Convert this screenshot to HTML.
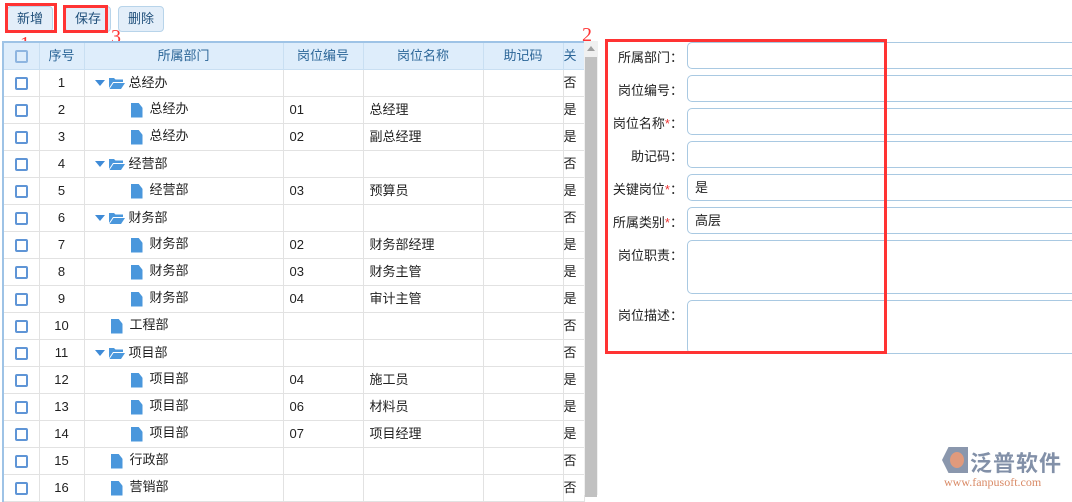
<!DOCTYPE html>
<html><head><meta charset="utf-8"><style>
*{margin:0;padding:0;box-sizing:border-box}
body{width:1072px;height:495px;overflow:hidden;background:#fff;font-family:"Liberation Sans","Noto Sans CJK SC",sans-serif;font-size:13px;color:#222;position:relative}
.btn{position:absolute;top:6px;height:26px;border:1px solid #b8d4ea;border-radius:4px;background:#e3eef9;color:#1f4f7a;line-height:24px;text-align:center;width:46px}
.red{position:absolute;border:3px solid #f33}
.num{position:absolute;color:#f33;font-family:"Liberation Serif",serif;font-size:20px}
table{position:absolute;left:2px;top:41px;border-collapse:collapse;table-layout:fixed;border-left:2px solid #9ec3e6}
td,th{border:1px solid #e2e2e2;height:27px;padding:0;white-space:nowrap;overflow:hidden;font-weight:normal;line-height:16px}
th{background:#deedfb;color:#2c6698;border-color:#c9dff2;border-top:2px solid #9ec3e6}
td.c{text-align:center}
.cb{display:inline-block;width:13px;height:13px;border:2px solid #5f95d6;border-radius:2px;vertical-align:middle}
.ar{display:inline-block;width:0;height:0;border-left:5px solid transparent;border-right:5px solid transparent;border-top:6px solid #3f8bd7;vertical-align:middle;margin-right:4px}
.fd{display:inline-block;width:16px;height:12px;vertical-align:middle;margin-right:4px}
.fl{display:inline-block;width:12px;height:15px;background:#4a97dc;vertical-align:middle;margin-right:7px;clip-path:polygon(0 0,65% 0,100% 35%,100% 100%,0 100%)}
.sb{position:absolute;left:584px;top:41px;width:14px;height:454px;background:#f0f0f0}
.sb i{position:absolute;left:1px;top:16px;width:12px;height:440px;background:#c1c1c1}
.sb b{position:absolute;left:3px;top:5px;border-left:4px solid transparent;border-right:4px solid transparent;border-bottom:5px solid #a0a0a0}
.lb{position:absolute;width:76px;text-align:right;left:607px;font-size:13px;color:#222}
.lb s{color:#e33;text-decoration:none}
.in{position:absolute;left:687px;width:400px;height:27px;border:1px solid #a9c9e2;border-radius:5px;background:#fff;padding-left:7px;line-height:25px}
</style></head><body>
<svg width="0" height="0" style="position:absolute"><symbol id="f" viewBox="0 0 16 12"><path d="M0 1h5l1.5 1.5H14V5H4L0 11z" fill="#4a97dc"/><path d="M4.5 6H16L12 12H0.5z" fill="#4a97dc"/></symbol></svg>
<div class="btn" style="left:7px">新增</div>
<div class="btn" style="left:65px">保存</div>
<div class="btn" style="left:118px">删除</div>
<div class="red" style="left:5px;top:3px;width:52px;height:30px"></div>
<div class="red" style="left:63px;top:5px;width:45px;height:28px"></div>
<div class="num" style="left:20px;top:33px">1</div>
<div class="num" style="left:111px;top:26px">3</div>
<div class="num" style="left:582px;top:24px">2</div>
<table>
<colgroup><col style="width:36px"><col style="width:45px"><col style="width:199px"><col style="width:80px"><col style="width:120px"><col style="width:80px"><col style="width:21px"></colgroup>
<tr><th style="height:26px"><span class="cb" style="border-color:#8eb5e0"></span></th><th style="height:26px">序号</th><th>所属部门</th><th>岗位编号</th><th>岗位名称</th><th>助记码</th><th style="text-align:left">关</th></tr>
<tr><td class="c"><span class="cb"></span></td><td class="c">1</td><td style="padding-left:10px"><span class="ar"></span><svg class="fd"><use href="#f"/></svg>总经办</td><td></td><td></td><td></td><td>否</td></tr>
<tr><td class="c"><span class="cb"></span></td><td class="c">2</td><td style="padding-left:46px"><span class="fl"></span>总经办</td><td style="padding-left:6px">01</td><td style="padding-left:6px">总经理</td><td></td><td>是</td></tr>
<tr><td class="c"><span class="cb"></span></td><td class="c">3</td><td style="padding-left:46px"><span class="fl"></span>总经办</td><td style="padding-left:6px">02</td><td style="padding-left:6px">副总经理</td><td></td><td>是</td></tr>
<tr><td class="c"><span class="cb"></span></td><td class="c">4</td><td style="padding-left:10px"><span class="ar"></span><svg class="fd"><use href="#f"/></svg>经营部</td><td></td><td></td><td></td><td>否</td></tr>
<tr><td class="c"><span class="cb"></span></td><td class="c">5</td><td style="padding-left:46px"><span class="fl"></span>经营部</td><td style="padding-left:6px">03</td><td style="padding-left:6px">预算员</td><td></td><td>是</td></tr>
<tr><td class="c"><span class="cb"></span></td><td class="c">6</td><td style="padding-left:10px"><span class="ar"></span><svg class="fd"><use href="#f"/></svg>财务部</td><td></td><td></td><td></td><td>否</td></tr>
<tr><td class="c"><span class="cb"></span></td><td class="c">7</td><td style="padding-left:46px"><span class="fl"></span>财务部</td><td style="padding-left:6px">02</td><td style="padding-left:6px">财务部经理</td><td></td><td>是</td></tr>
<tr><td class="c"><span class="cb"></span></td><td class="c">8</td><td style="padding-left:46px"><span class="fl"></span>财务部</td><td style="padding-left:6px">03</td><td style="padding-left:6px">财务主管</td><td></td><td>是</td></tr>
<tr><td class="c"><span class="cb"></span></td><td class="c">9</td><td style="padding-left:46px"><span class="fl"></span>财务部</td><td style="padding-left:6px">04</td><td style="padding-left:6px">审计主管</td><td></td><td>是</td></tr>
<tr><td class="c"><span class="cb"></span></td><td class="c">10</td><td style="padding-left:26px"><span class="fl"></span>工程部</td><td></td><td></td><td></td><td>否</td></tr>
<tr><td class="c"><span class="cb"></span></td><td class="c">11</td><td style="padding-left:10px"><span class="ar"></span><svg class="fd"><use href="#f"/></svg>项目部</td><td></td><td></td><td></td><td>否</td></tr>
<tr><td class="c"><span class="cb"></span></td><td class="c">12</td><td style="padding-left:46px"><span class="fl"></span>项目部</td><td style="padding-left:6px">04</td><td style="padding-left:6px">施工员</td><td></td><td>是</td></tr>
<tr><td class="c"><span class="cb"></span></td><td class="c">13</td><td style="padding-left:46px"><span class="fl"></span>项目部</td><td style="padding-left:6px">06</td><td style="padding-left:6px">材料员</td><td></td><td>是</td></tr>
<tr><td class="c"><span class="cb"></span></td><td class="c">14</td><td style="padding-left:46px"><span class="fl"></span>项目部</td><td style="padding-left:6px">07</td><td style="padding-left:6px">项目经理</td><td></td><td>是</td></tr>
<tr><td class="c"><span class="cb"></span></td><td class="c">15</td><td style="padding-left:26px"><span class="fl"></span>行政部</td><td></td><td></td><td></td><td>否</td></tr>
<tr><td class="c"><span class="cb"></span></td><td class="c">16</td><td style="padding-left:26px"><span class="fl"></span>营销部</td><td></td><td></td><td></td><td>否</td></tr>
</table>
<div class="sb"><b></b><i></i></div>
<div class="lb" style="top:47px">所属部门：</div><div class="in" style="top:42px"></div>
<div class="lb" style="top:80px">岗位编号：</div><div class="in" style="top:75px"></div>
<div class="lb" style="top:113px">岗位名称<s>*</s>：</div><div class="in" style="top:108px"></div>
<div class="lb" style="top:146px">助记码：</div><div class="in" style="top:141px"></div>
<div class="lb" style="top:179px">关键岗位<s>*</s>：</div><div class="in" style="top:174px">是</div>
<div class="lb" style="top:212px">所属类别<s>*</s>：</div><div class="in" style="top:207px">高层</div>
<div class="lb" style="top:245px">岗位职责：</div><div class="in" style="top:240px;height:54px"></div>
<div class="lb" style="top:305px">岗位描述：</div><div class="in" style="top:300px;height:54px"></div>
<div class="red" style="left:605px;top:39px;width:282px;height:315px"></div>
<div style="position:absolute;left:942px;top:447px;width:26px;height:26px;background:#8a97ad;clip-path:polygon(25% 0,100% 0,100% 100%,25% 100%,0 50%)"></div>
<div style="position:absolute;left:950px;top:452px;width:14px;height:16px;background:#e19a7c;border-radius:50%"></div>
<div style="position:absolute;left:970px;top:446px;font-size:22px;color:#8290a8;font-weight:bold;letter-spacing:1px">泛普软件</div>
<div style="position:absolute;left:944px;top:475px;font-size:12px;color:#d98a66;font-family:'Liberation Serif',serif">www.fanpusoft.com</div>
</body></html>
